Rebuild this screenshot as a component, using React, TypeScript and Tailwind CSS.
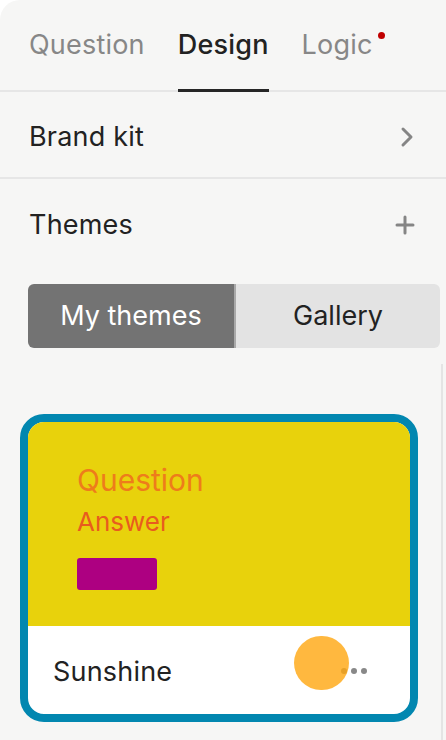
import React from "react";

const tabs = [
    { id: "question", label: "Question" },
    { id: "design", label: "Design", active: true },
    { id: "logic", label: "Logic", dot: true },
];

function Chevron() {
    return (
        <svg width="14" height="22" viewBox="0 0 14 22" fill="none">
            <path d="M3 3l8 8-8 8" stroke="#858585" strokeWidth="3" strokeLinecap="round" strokeLinejoin="round" />
        </svg>
    );
}

function Plus() {
    return (
        <svg width="20" height="20" viewBox="0 0 20 20" fill="none">
            <path d="M10 2v16M2 10h16" stroke="#858585" strokeWidth="3" strokeLinecap="round" />
        </svg>
    );
}

export default function App() {
    return (
        <div className="w-[446px] h-[740px] bg-white overflow-hidden" style={{ fontFamily: "Inter, 'Noto Sans', sans-serif" }}>
            <div className="relative h-full bg-[#f6f6f5] rounded-tl-[20px] text-[#222222]">
                {/* tab bar */}
                <div className="h-[92px] border-b-2 border-[#e6e6e6] flex items-stretch gap-[33px] px-[29px]">
                    {tabs.map((t) => (
                        <div key={t.id} className="relative flex items-center">
                            <span className={"text-[27px] tracking-[0.2px] " + (t.active ? "text-[#222222] font-medium" : "text-[#878787]")}>
                                {t.label}
                            </span>
                            {t.dot && <span className="absolute right-[-12px] top-[32px] w-[7px] h-[7px] rounded-full bg-[#c00000]" />}
                            {t.active && <span className="absolute left-0 right-0 bottom-[-2px] h-[3px] bg-[#262626]" />}
                        </div>
                    ))}
                </div>

                {/* brand kit */}
                <div className="h-[87px] border-b-2 border-[#e6e6e6] flex items-center justify-between pl-[29px] pr-[32px] pt-[5px]">
                    <span className="text-[27px] tracking-[0.2px]">Brand kit</span>
                    <Chevron />
                </div>

                {/* themes */}
                <div className="h-[88px] flex items-center justify-between pl-[29px] pr-[31px] pt-[4px]">
                    <span className="text-[27px] tracking-[0.2px]">Themes</span>
                    <Plus />
                </div>

                {/* segmented */}
                <div className="ml-[28px] mr-[6px] mt-[17px] h-[64px] flex rounded-[6px] overflow-hidden text-[27px]">
                    <div className="w-[206px] bg-[#737373] text-white flex items-center justify-center">My themes</div>
                    <div className="w-[2px] bg-[#a9a9a9]" />
                    <div className="flex-1 bg-[#e3e3e3] flex items-center justify-center text-[#222222]">Gallery</div>
                </div>

                <div className="absolute right-[3px] top-[364px] bottom-0 w-[2px] bg-[#e4e4e4]" />

                {/* theme card */}
                <div className="ml-[20px] mt-[66px] w-[398px] h-[308px] border-[8px] border-[#0287b0] rounded-[24px] overflow-hidden bg-white">
                    <div className="h-[204px] bg-[#e8d20c] pl-[49px] pt-[40px]">
                        <div className="text-[30px] leading-[36px] text-[#ee7c1b]">Question</div>
                        <div className="mt-[8px] text-[26px] leading-[32px] text-[#e85c1e]">Answer</div>
                        <div className="mt-[20px] w-[80px] h-[32px] rounded-[3px] bg-[#ad0081]" />
                    </div>
                    <div className="relative h-[88px] flex items-center justify-between pl-[25px] pr-[43px]">
                        <span className="text-[27px] tracking-[0.2px] pt-[4px]">Sunshine</span>
                        <div className="flex gap-[4px] pt-[2px]">
                            <span className="w-[6px] h-[6px] rounded-full bg-[#888888]" />
                            <span className="w-[6px] h-[6px] rounded-full bg-[#888888]" />
                            <span className="w-[6px] h-[6px] rounded-full bg-[#888888]" />
                        </div>
                        <span className="absolute left-[266px] top-[10px] w-[55px] h-[54px] rounded-full bg-[#ffa60f] opacity-80" />
                    </div>
                </div>
            </div>
        </div>
    );
}
